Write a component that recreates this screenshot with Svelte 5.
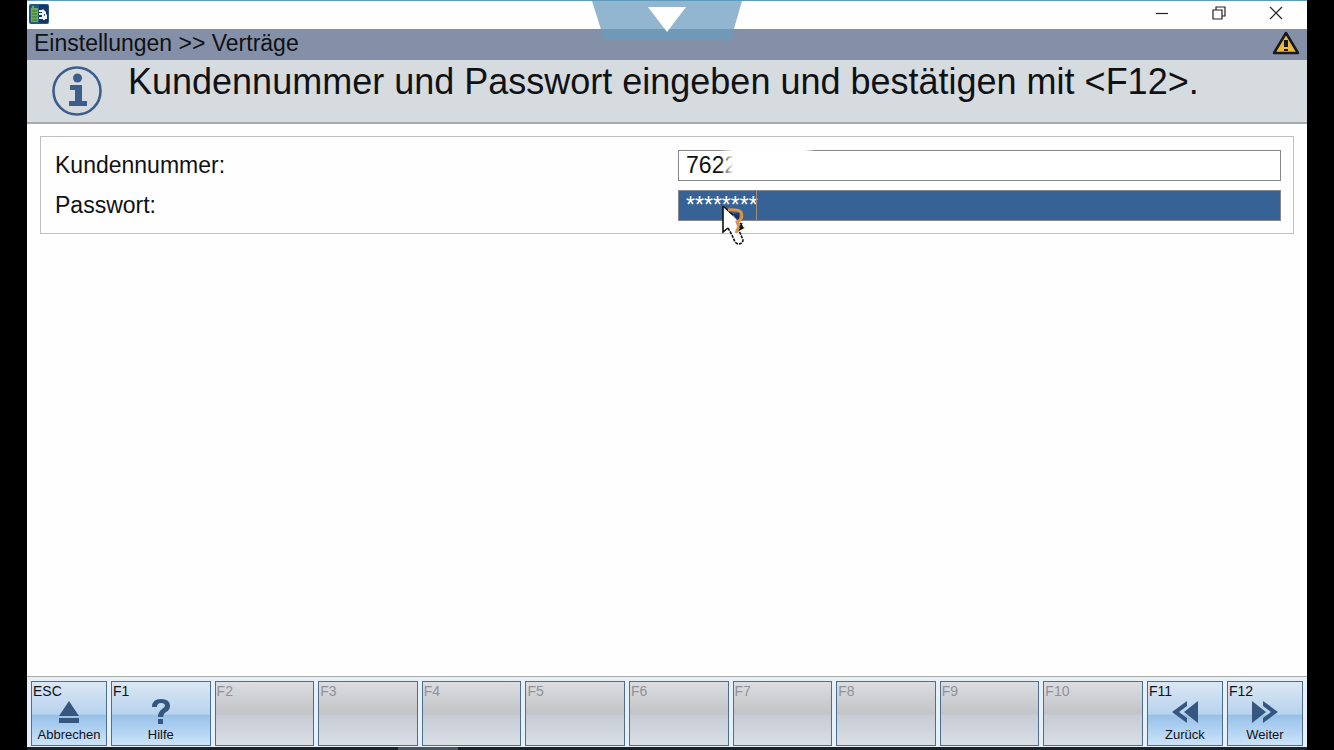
<script lang="ts">
  type Key = { name: string; label?: string; icon?: string; narrow?: boolean };

  const keys: Key[] = [
    { name: "ESC", label: "Abbrechen", icon: "eject", narrow: true },
    { name: "F1", label: "Hilfe", icon: "help" },
    { name: "F2" },
    { name: "F3" },
    { name: "F4" },
    { name: "F5" },
    { name: "F6" },
    { name: "F7" },
    { name: "F8" },
    { name: "F9" },
    { name: "F10" },
    { name: "F11", label: "Zurück", icon: "back", narrow: true },
    { name: "F12", label: "Weiter", icon: "next", narrow: true },
  ];

  let customer = $state("7622");
  let password = $state("********");
</script>

<div class="screen">
  <div class="window">
    <header class="titlebar">
      <svg class="logo" width="20" height="20" viewBox="0 0 20 20">
        <rect width="20" height="20" rx="2" fill="#245786" />
        <path d="M10 1h9v18h-9z" fill="#153766" />
        <path d="M2 4h1V2h2v2h4v14H2z" fill="#6fae4b" />
        <path d="M3 7h5M3 10h5M3 13h5M3 16h5" stroke="#347340" />
        <path d="M10 6h3l1-1 3 3v2l1 1v4h-2v1h-2v-1h-4v-2h3v-2h-3v-2h3V8h-3z" fill="#f0f5fa" />
        <path d="M15 10h1v2h-1z" fill="#4b7499" />
      </svg>
      <div class="controls">
        <button aria-label="Minimieren">
          <svg width="14" height="14" viewBox="0 0 14 14"><path d="M1 7.5h12" /></svg>
        </button>
        <button aria-label="Wiederherstellen">
          <svg width="14" height="14" viewBox="0 0 14 14"><path d="M1 4h9v9H1zM4 4V1h9v9h-3" /></svg>
        </button>
        <button aria-label="Schließen">
          <svg width="14" height="14" viewBox="0 0 14 14"><path d="M1 1l12 12M13 1L1 13" /></svg>
        </button>
      </div>
      <button class="pulldown" aria-label="Menü öffnen">
        <svg width="150" height="38" viewBox="0 0 150 38">
          <path d="M0 0h150l-11 38H12z" fill="#6a9bbd" fill-opacity=".73" />
          <path d="M56 6h38L75 31z" fill="#fff" />
        </svg>
      </button>
    </header>

    <nav class="path">
      <span>Einstellungen &gt;&gt; Verträge</span>
      <svg width="28" height="24" viewBox="0 0 28 24">
        <path d="M14 2L26 22H2z" fill="#ecb83e" stroke="#17191c" stroke-width="2.500" stroke-linejoin="round" />
        <path d="M12 9h4v7h-4zM12 18h4v2h-4z" fill="#17191c" />
      </svg>
    </nav>

    <div class="message">
      <svg width="50" height="50" viewBox="0 0 50 50">
        <circle cx="25" cy="25" r="23.500" fill="none" stroke="#3b5f8a" stroke-width="2.600" />
        <circle cx="25.500" cy="12" r="4.500" fill="#3b5f8a" />
        <path d="M18 19h12v16h5v5H17v-5h6V24h-5z" fill="#3b5f8a" />
      </svg>
      <h1>Kundennummer und Passwort eingeben und bestätigen mit &lt;F12&gt;.</h1>
    </div>

    <main>
      <form>
        <label for="customer">Kundennummer:</label>
        <div class="field">
          <input id="customer" type="text" bind:value={customer} />
          <span class="mask"></span>
        </div>
        <label for="password">Passwort:</label>
        <div class="field active">
          <input id="password" type="text" autocomplete="off" bind:value={password} />
          <span class="caret"></span>
          <svg class="pointer" width="24" height="41" viewBox="0 0 24 41">
            <path d="M1 1v26l5-4 4 7 3 7q2 2 4 2 4-1 4-4l-2-5-3-6 5-1-3-5z" fill="#fff" />
            <path d="M1 1v26l5-4M1 1l10 9" fill="none" stroke="#111" stroke-width="1.600" />
            <path d="M6 23l4 7 3 7q2 2 4 2 4-1 4-4l-2-5-3-6 5-1-3-5" fill="none" stroke="#111" stroke-width="1.600" stroke-dasharray="3 1" />
            <path d="M11 9l6-1v6l-2 1z" fill="#1d3558" />
            <path d="M6 5q10-1 13 2 2 5-1 8l-3 2 2 4-3 7" fill="none" stroke="#dc9144" stroke-width="3" />
            <path d="M20 18l-2 4 3 1-4 2" fill="none" stroke="#111" stroke-width="1.400" />
          </svg>
        </div>
      </form>
    </main>

    <footer>
      {#each keys as key}
        <button class="key" class:narrow={key.narrow} disabled={!key.label}>
          <span class="name">{key.name}</span>
          {#if key.icon}
            <svg width="28" height="26" viewBox="0 0 28 26">
              {#if key.icon == "eject"}
                <path d="M14 1l10 15H4zM4 18h20v5H4z" />
              {:else if key.icon == "help"}
                <path d="M5 7q0-8 9-8 9 0 9 7 0 4-4 6-3 2-3 5h-5q0-5 4-8 3-2 3-3 0-3-4-3-4 0-4 4zM11 19h5v5h-5z" />
              {:else if key.icon == "back"}
                <path d="M27 1v22L13 12zM16 1v5L8 12l8 6v5L1 12z" />
              {:else}
                <path d="M1 1v22l14-11zM12 1v5l8 6-8 6v5l15-11z" />
              {/if}
            </svg>
            <span class="label">{key.label}</span>
          {/if}
        </button>
      {/each}
    </footer>
    <div class="taskbar"><span></span></div>
  </div>
</div>

<style>
  :global(body) {
    margin: 0;
    background: #000;
  }

  .screen {
    min-height: 100vh;
    padding: 0 27px;
    box-sizing: border-box;
    display: flex;
    font-family: "Liberation Sans", Arial, sans-serif;
    color: #101114;
  }

  .window {
    flex: 1;
    min-width: 0;
    display: flex;
    flex-direction: column;
    background: #fefefe;
  }

  button {
    font-family: inherit;
    color: inherit;
    padding: 0;
  }

  .titlebar {
    position: relative;
    height: 28px;
    border-top: 1px solid #5f9bbd;
    padding: 0 24px 0 2px;
    display: flex;
    align-items: center;
    justify-content: space-between;
  }

  .logo {
    padding-bottom: 2px;
  }

  .controls {
    display: flex;
    gap: 43px;
    padding-bottom: 4px;

    button {
      display: flex;
      border: 0;
      background: none;
    }

    svg {
      fill: none;
      stroke: #222;
      stroke-width: 1.2;
    }
  }

  .pulldown {
    position: absolute;
    top: 0;
    left: 50%;
    transform: translateX(-50%);
    border: 0;
    background: none;

    svg {
      display: block;
    }
  }

  .path {
    height: 31px;
    box-sizing: border-box;
    padding: 0 7px 3px;
    display: flex;
    align-items: center;
    justify-content: space-between;
    background: #8390a7;
    font-size: 23px;
    line-height: 28px;
  }

  .message {
    height: 62px;
    padding-left: 25px;
    display: flex;
    align-items: center;
    gap: 26px;
    background: #d6dbdf;
    border-bottom: 2px solid #a9abac;

    svg {
      flex: none;
    }

    h1 {
      margin: 0;
      padding-bottom: 18px;
      font-size: 36px;
      font-weight: normal;
      line-height: 40px;
      white-space: nowrap;
    }
  }

  main {
    flex: 1;
    padding: 12px 13px;
  }

  form {
    display: grid;
    grid-template-columns: 31fr 30fr;
    row-gap: 9px;
    align-items: center;
    padding: 13px 12px 12px 14px;
    border: 1px solid #bfc0c1;
    font-size: 23px;
  }

  .field {
    position: relative;
    display: flex;
  }

  input {
    width: 100%;
    height: 31px;
    box-sizing: border-box;
    padding: 0 7px;
    border: 1px solid #85878a;
    border-radius: 0;
    background: #fff;
    color: inherit;
    font-family: inherit;
    font-size: 23px;
    outline: none;
  }

  .active input {
    background: #376295;
    color: #fff;
  }

  .mask {
    position: absolute;
    left: 42px;
    top: 0;
    width: 96px;
    height: 28px;
    background: linear-gradient(90deg, transparent, #fff 14%, #fff 88%, transparent);
  }

  .caret {
    position: absolute;
    left: 78px;
    top: 1px;
    bottom: 1px;
    width: 1px;
    background: #a88a78;
  }

  .pointer {
    position: absolute;
    left: 44px;
    top: 15px;
  }

  footer {
    display: flex;
    gap: 4px;
    padding: 4px 4px 1px;
    border-top: 1px solid #aaaca9;
    background: #e8f0f7;
  }

  .key {
    flex: 1 1 0;
    min-width: 0;
    height: 65px;
    box-sizing: border-box;
    border: 1px solid #4c6e93;
    border-radius: 0;
    background: linear-gradient(#dbe7f4, #b7d3ee 51%, #97c1e9 53%, #cce4fa);
    display: flex;
    flex-direction: column;
    align-items: center;

    &.narrow {
      flex: 0 0 76px;
    }

    &:disabled {
      background: linear-gradient(#dcdde0, #c3c4c8 50%, #c7ccd5 54%, #dadee5);
      color: #919297;
    }

    .name {
      align-self: flex-start;
      padding-left: 1px;
      font-size: 14px;
      line-height: 18px;
    }

    svg {
      flex: none;
      overflow: visible;
      fill: #34567f;
    }

    .label {
      font-size: 13px;
      line-height: 18px;
    }
  }

  .taskbar {
    height: 3px;
    background: #1c2229;

    span {
      display: block;
      width: 60px;
      height: 3px;
      margin-left: 29%;
      background: #49535d;
    }
  }
</style>
